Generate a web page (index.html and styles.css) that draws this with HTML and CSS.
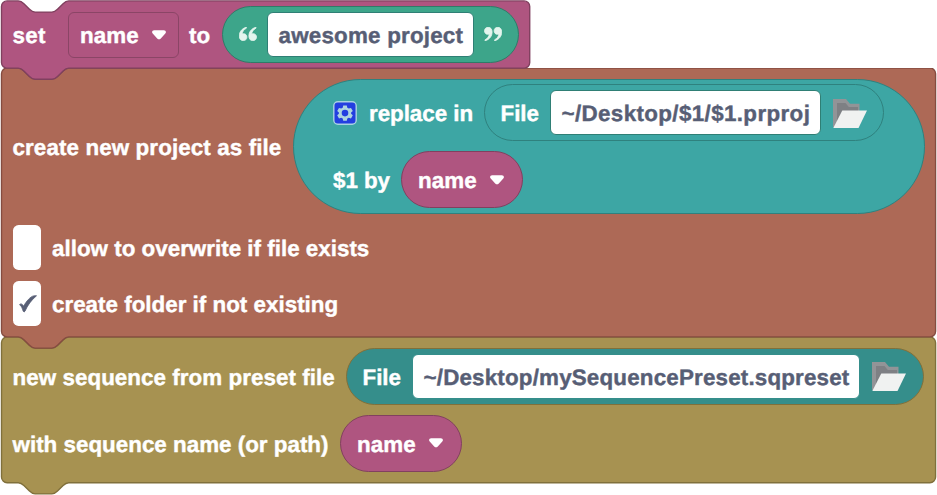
FILE: index.html
```
<!DOCTYPE html>
<html lang="en">
<head>
<meta charset="utf-8">
<title>Project blocks</title>
<link rel="stylesheet" href="styles.css">
</head>
<body>
<svg class="defs" aria-hidden="true">
  <symbol id="arrow" viewBox="0 0 14 10"><path d="M2.200.3h9.600c2 0 2.800 1.900 1.500 3.300L8.800 8.500Q7 10.200 5.200 8.500L.7 3.600C-.6 2.200.2.3 2.200.3z" fill="#fff"/></symbol>
  <symbol id="quote" viewBox="0 0 18 14"><path d="M7.300.2C2.800 1.600.3 4.800.3 9c0 2.900 1.500 4.700 3.900 4.700 2.200 0 3.700-1.500 3.700-3.600 0-2-1.400-3.400-3.300-3.400-.7 0-1.100.1-1.500.3.300-2.500 1.800-4.400 4.400-5.900zM16.900.2c-4.500 1.400-7 4.600-7 8.800 0 2.900 1.500 4.700 3.900 4.700 2.200 0 3.700-1.500 3.700-3.600 0-2-1.400-3.400-3.300-3.400-.7 0-1.100.1-1.500.3.300-2.500 1.800-4.400 4.400-5.900z" fill="#e4f5ee" stroke="#e4f5ee" stroke-width=".8"/></symbol>
  <symbol id="folder" viewBox="0 0 34 29"><path d="M0 0h13l4 4.700h9.500V22L0 28z" fill="#929497"/><path d="M4 4h8.500l3.300 4H25v6L4 24z" fill="#7e8084"/><path d="M9.300 11.500H34L25.500 29H.3z" fill="#f0f2f1"/></symbol>
</svg>
<main class="workspace">
  <section class="block set-block">
    <svg class="shape" viewBox="0 0 937 80"><path transform="translate(1.500 .9) scale(1.400)" d="M0 4a4 4 0 0 1 4-4h8c2 0 3 1 4 2l4 4c1 1 2 2 4 2h12c2 0 3-1 4-2l4-4c1-1 2-2 4-2H373.300a4 4 0 0 1 4 4V44a4 4 0 0 1-4 4H48c-2 0-3 1-4 2l-4 4c-1 1-2 2-4 2H24c-2 0-3-1-4-2l-4-4c-1-1-2-2-4-2H4a4 4 0 0 1-4-4z"/></svg>
    <span class="label w-set">set</span>
    <span class="dropdown"><span>name</span><svg class="arrow"><use href="#arrow"/></svg></span>
    <span class="label w-to">to</span>
    <span class="pill text-pill"><svg class="quote"><use href="#quote"/></svg><span class="input w-text">awesome project</span><svg class="quote closing"><use href="#quote"/></svg></span>
  </section>

  <section class="block create-block">
    <svg class="shape" viewBox="0 0 937 282"><path transform="translate(1.500 .1) scale(1.400)" d="M0 4a4 4 0 0 1 4-4h8c2 0 3 1 4 2l4 4c1 1 2 2 4 2h12c2 0 3-1 4-2l4-4c1-1 2-2 4-2H663.200a4 4 0 0 1 4 4V188a4 4 0 0 1-4 4H48c-2 0-3 1-4 2l-4 4c-1 1-2 2-4 2H24c-2 0-3-1-4-2l-4-4c-1-1-2-2-4-2H4a4 4 0 0 1-4-4z"/></svg>
    <div class="row create-row">
      <span class="label w-create">create new project as file</span>
      <div class="replace">
        <div class="row">
          <svg class="gear" viewBox="0 0 24 24"><rect x=".8" y=".8" width="22.400" height="22.400" rx="4" fill="#233fe0" stroke="#a9d3e0" stroke-width="1.400"/><path d="M10.200 4.500h3.600l.5 2.200 1.500.9 2.200-.7 1.800 3.100-1.700 1.500v1.300l1.700 1.500-1.800 3.100-2.200-.7-1.500.9-.5 2.200h-3.600l-.5-2.200-1.500-.9-2.200.7-1.800-3.100 1.700-1.500v-1.300L4.200 10 6 6.900l2.200.7 1.500-.9zM12 8.800a3.300 3.300 0 1 0 0 6.600 3.300 3.300 0 0 0 0-6.600z" fill="#add5df" fill-rule="evenodd"/></svg>
          <span class="label w-replace">replace in</span>
          <span class="pill file-pill"><span class="label w-file">File</span><span class="input w-path">~/Desktop/$1/$1.prproj</span><svg class="folder"><use href="#folder"/></svg></span>
        </div>
        <div class="row">
          <span class="label w-by">$1 by</span>
          <span class="pill variable"><span>name</span><svg class="arrow"><use href="#arrow"/></svg></span>
        </div>
      </div>
    </div>
    <div class="row check-row"><span class="checkbox"></span><span class="label tight">allow to overwrite if file exists</span></div>
    <div class="row check-row"><span class="checkbox"><svg class="tick" viewBox="0 0 18 18"><path d="M.5 9.800c1-1.500 2.900-1.200 4 1.500C7.300 6.200 11.500 1.500 14.500.9q1.300-.3 3-.1C12.300 5 8.500 10.500 6 16.200q-.8 1.500-1.800 0C3.200 13.500 2.500 10.500.5 9.800z" fill="#575e75" stroke="#575e75" stroke-width=".8"/></svg></span><span class="label tight">create folder if not existing</span></div>
  </section>

  <section class="block sequence-block">
    <svg class="shape" viewBox="0 0 937 158"><path transform="translate(1.500 .1) scale(1.400)" d="M0 4a4 4 0 0 1 4-4h8c2 0 3 1 4 2l4 4c1 1 2 2 4 2h12c2 0 3-1 4-2l4-4c1-1 2-2 4-2H663.200a4 4 0 0 1 4 4V100a4 4 0 0 1-4 4H48c-2 0-3 1-4 2l-4 4c-1 1-2 2-4 2H24c-2 0-3-1-4-2l-4-4c-1-1-2-2-4-2H4a4 4 0 0 1-4-4z"/></svg>
    <div class="row">
      <span class="label w-preset">new sequence from preset file</span>
      <span class="pill file-pill preset-pill"><span class="label w-file">File</span><span class="input w-preset-path">~/Desktop/mySequencePreset.sqpreset</span><svg class="folder"><use href="#folder"/></svg></span>
    </div>
    <div class="row">
      <span class="label w-with">with sequence name (or path)</span>
      <span class="pill variable"><span>name</span><svg class="arrow"><use href="#arrow"/></svg></span>
    </div>
  </section>
</main>
</body>
</html>
```
FILE: styles.css
```
* { box-sizing: border-box; }
body { margin: 0; background: #fff; overflow: hidden; }
.defs { position: absolute; width: 0; height: 0; }
.workspace {
  width: 937px;
  height: 495px;
  font: bold 22.4px/26px "Liberation Sans", Arial, sans-serif;
  letter-spacing: .1px;
  text-rendering: geometricPrecision;
  -webkit-text-stroke: .4px;
  color: #fff;
  white-space: nowrap;
}
svg { display: block; flex: none; }
.block { position: relative; padding-left: 12.5px; }
.block > :not(.shape) { position: relative; }
.shape { position: absolute; left: 0; top: 0; width: 937px; stroke-width: 1; }
.row { display: flex; align-items: center; }
.label { flex: none; padding-top: 3px; }
.tight { letter-spacing: 0; }

.set-block { height: 68px; display: flex; align-items: center; padding-top: 1px; z-index: 3; }
.set-block .shape { height: 80px; fill: #af5580; stroke: #80405f; }
.create-block { height: 269px; padding-top: 11px; z-index: 2; }
.create-block .shape { height: 282px; fill: #ad6956; stroke: #854c40; }
.sequence-block { height: 158px; padding-top: 11px; z-index: 1; }
.sequence-block .shape { height: 158px; fill: #a79251; stroke: #80703b; }
.sequence-block .row { height: 56px; margin-bottom: 11px; }

.w-set { width: 55.5px; letter-spacing: .3px; }
.w-to { width: 33px; }
.w-create { width: 280.5px; }
.w-replace { width: 115px; letter-spacing: -.05px; }
.w-by { width: 68px; letter-spacing: -.05px; }
.w-file { width: 49.5px; letter-spacing: -.05px; }
.w-preset { width: 333.5px; letter-spacing: .04px; }
.w-with { width: 327.5px; letter-spacing: 0; }
.w-text { width: 207px; letter-spacing: .2px; }
.w-path { width: 271px; letter-spacing: .36px; }
.w-preset-path { width: 448px; letter-spacing: .17px; }

.dropdown {
  display: flex; align-items: center; justify-content: space-between;
  width: 111px; height: 46px; margin-right: 10px; padding: 3px 12px 0 11px;
  border: 1.4px solid #8b4566; border-radius: 6px;
}
.arrow { width: 14px; height: 10px; margin-top: -3px; }
.pill { display: flex; align-items: center; flex: none; height: 57px; border: 1.4px solid; border-radius: 29px; }
.text-pill { width: 297px; padding-left: 16px; background: #3da58a; border-color: #2f7c68; }
.quote { width: 18px; height: 14px; margin: -1px 10px 0 0; }
.closing { margin: -1px 0 0 10px; transform: rotate(180deg); }
.input {
  flex: none; height: 45px; padding: 10px 0 0 10.5px;
  border: 1px solid #2f7f75; border-radius: 6px; background: #fff; color: #575e75;
}

.create-row { height: 135px; }
.replace {
  width: 632px; height: 135px; padding: 4px 0 0 39px;
  border: 1.4px solid #2f817e; border-radius: 68px; background: #3da6a4;
}
.replace .row { height: 57px; }
.replace .row + .row { margin-top: 10px; }
.gear { width: 24px; height: 24px; margin-right: 12px; }
.file-pill { width: 400px; padding-left: 15.5px; border-color: #2f817e; }
.preset-pill { width: 578px; background: #358e8b; border-color: #80703b; }
.preset-pill .input { border-color: #358e8b; }
.folder { width: 34px; height: 29px; margin: 1px 0 0 12px; }
.variable { width: 122px; padding: 3px 18px 0 16px; justify-content: space-between; background: #af5580; border-color: #82405f; }

.check-row { height: 45px; margin-top: 11px; }
.checkbox { width: 28.5px; height: 45px; margin-right: 11px; border-radius: 5.6px; background: #fff; display: flex; align-items: center; justify-content: center; }
.tick { width: 18px; height: 18px; margin: 0 0 0 3px; }
```
